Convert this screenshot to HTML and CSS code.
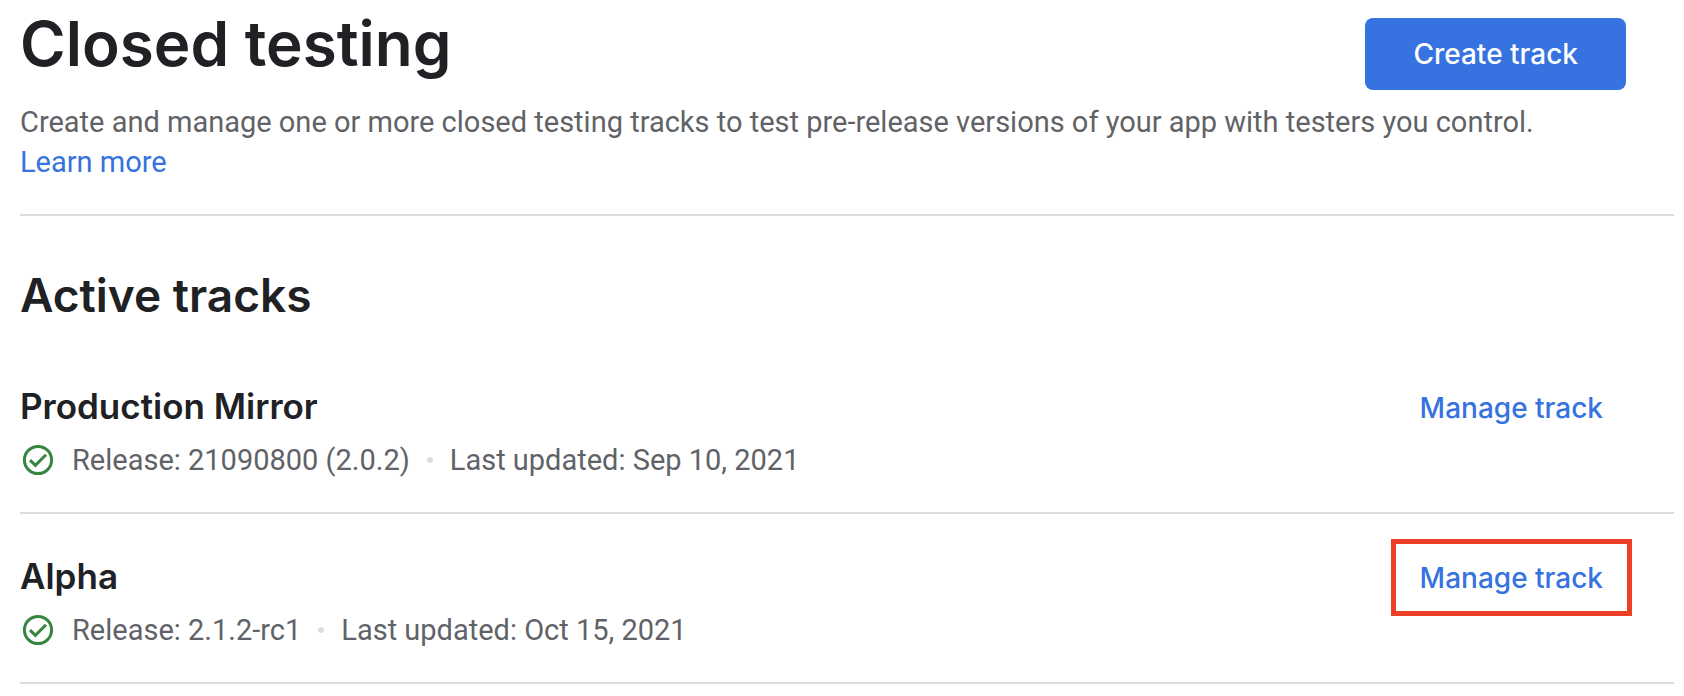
FILE: index.html
```html
<!DOCTYPE html>
<html lang="en">
<head>
<meta charset="utf-8">
<meta name="viewport" content="width=device-width, initial-scale=1">
<title>Closed testing</title>
<link rel="stylesheet" href="styles.css">
</head>
<body>
<main class="page">
  <header class="page-header">
    <div class="title-bar">
      <h1 class="page-title">Closed testing</h1>
      <button class="create-button" type="button">Create track</button>
    </div>
    <p class="intro">Create and manage one or more closed testing tracks to test pre-release versions of your app with testers you control.<br><a class="link" href="#">Learn more</a></p>
  </header>
  <section>
    <h2 class="section-title">Active tracks</h2>
    <ul class="tracks">
      <li class="track">
        <div class="track-info">
          <h3 class="track-name">Production Mirror</h3>
          <p class="track-meta">
            <svg class="check" viewBox="0 0 36 36" aria-hidden="true"><circle cx="18" cy="18" r="13.6"/><path d="M10 18.2l5.4 5.2L26 12.8"/></svg>
            <span>Release: 21090800 (2.0.2)</span><span class="dot"></span><span>Last updated: Sep 10, 2021</span>
          </p>
        </div>
        <button class="manage-button" type="button">Manage track</button>
      </li>
      <li class="track">
        <div class="track-info">
          <h3 class="track-name">Alpha</h3>
          <p class="track-meta">
            <svg class="check" viewBox="0 0 36 36" aria-hidden="true"><circle cx="18" cy="18" r="13.6"/><path d="M10 18.2l5.4 5.2L26 12.8"/></svg>
            <span>Release: 2.1.2-rc1</span><span class="dot"></span><span>Last updated: Oct 15, 2021</span>
          </p>
        </div>
        <button class="manage-button highlighted" type="button">Manage track</button>
      </li>
    </ul>
  </section>
</main>
</body>
</html>
```
FILE: styles.css
```css
* { box-sizing: border-box; }
body {
  margin: 0;
  background: #fff;
  color: #202124;
  font: 400 29px/40px Roboto, sans-serif;
}
h1, h2, h3, p, ul { margin: 0; padding: 0; }
button { cursor: pointer; font: 500 28px/40px Inter, sans-serif; }
.page { padding: 0 10px 0 20px; }
.page-header { padding-bottom: 32px; border-bottom: 2px solid #dadce0; }
.title-bar {
  display: flex;
  justify-content: space-between;
  align-items: flex-start;
  padding: 18px 48px 12px 0;
}
.page-title { font: 600 62px/52px Inter, sans-serif; }
.create-button {
  padding: 16px 48px;
  border: 0;
  border-radius: 8px;
  background: #3672e0;
  color: #fff;
}
.intro, .track-meta { color: #5f6368; }
.link { color: #3672e0; text-decoration: none; }
.section-title { padding: 47px 0 17px; font: 600 46px/64px Inter, sans-serif; }
.tracks { list-style: none; }
.track {
  display: flex;
  justify-content: space-between;
  align-items: flex-start;
  padding: 25px 42px 32px 0;
  border-bottom: 2px solid #dadce0;
}
.track-info { padding-top: 15px; }
.track-name { font: 600 35px/44px Inter, sans-serif; }
.track-meta { display: flex; align-items: center; margin-top: 12px; }
.check { width: 36px; height: 36px; margin-right: 16px; fill: none; stroke: #388540; stroke-width: 3; }
.dot { width: 6px; height: 6px; margin: 0 17px; border-radius: 50%; background: #dadce0; }
.manage-button {
  padding: 14px 24px 13px;
  border: 5px solid transparent;
  background: none;
  color: #3672e0;
}
.highlighted { border-color: #ee4026; }
```
